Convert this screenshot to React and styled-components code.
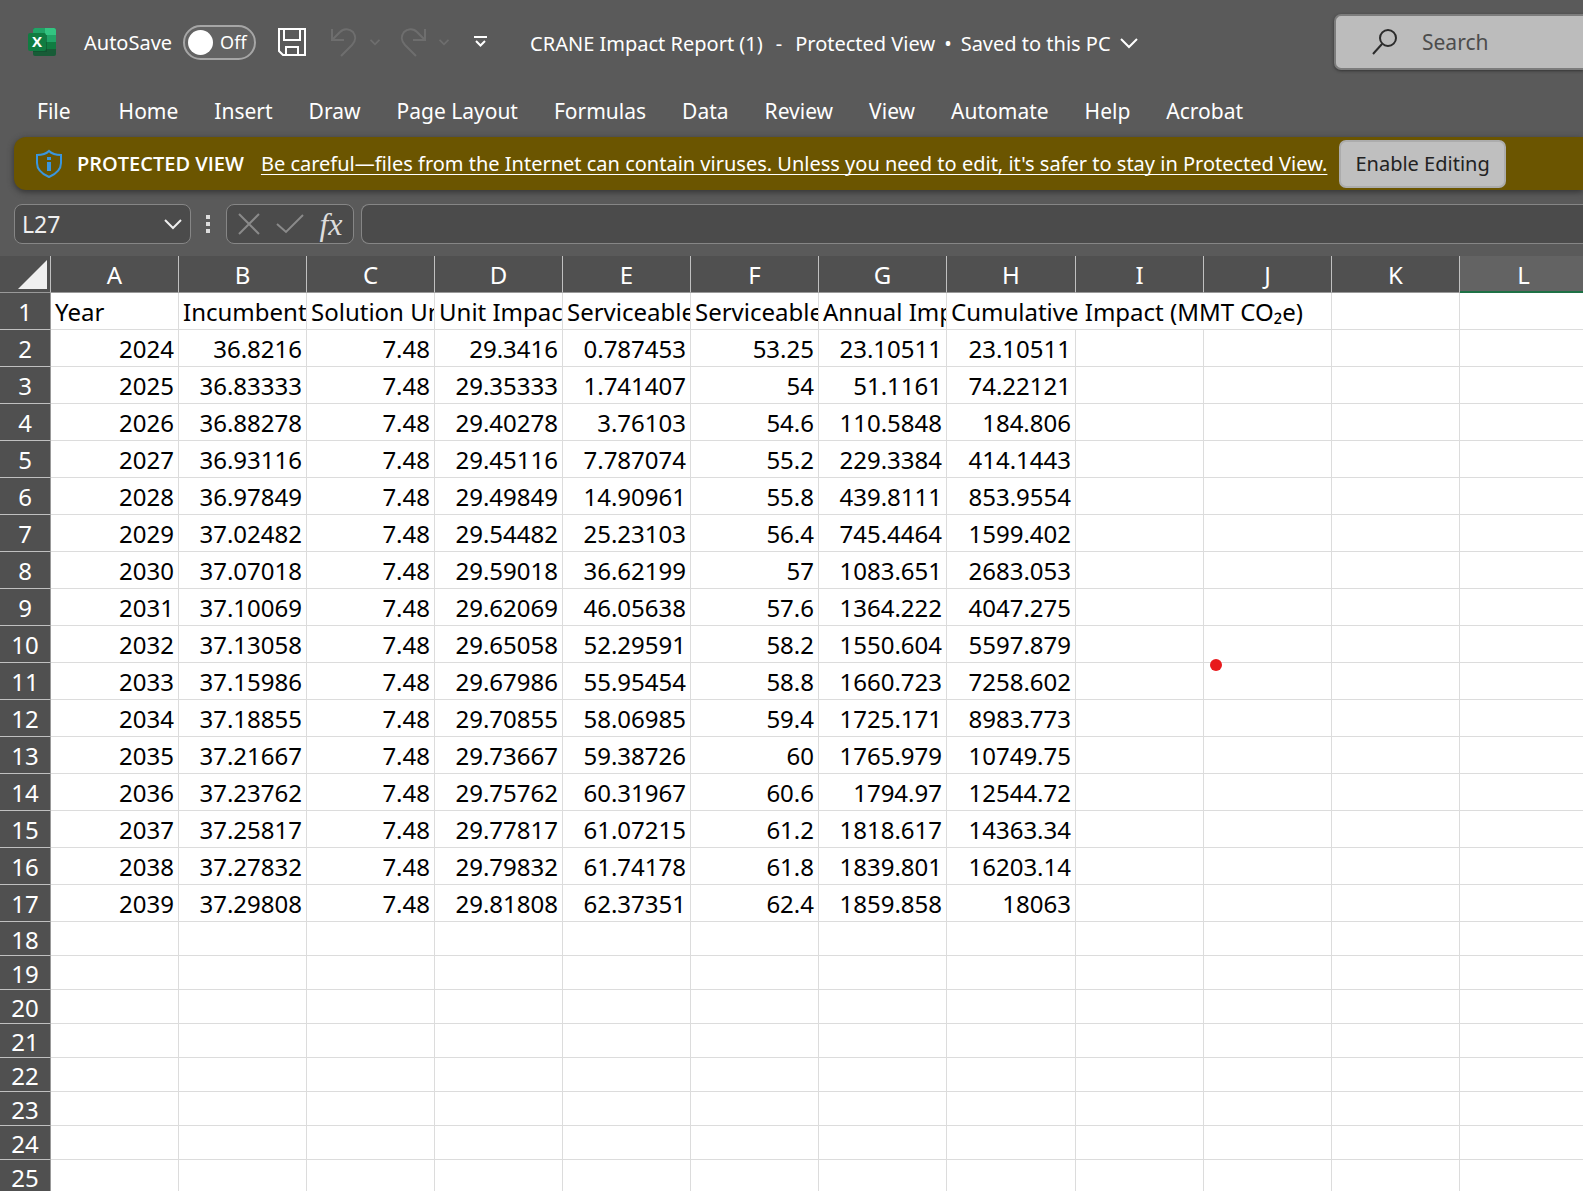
import React from 'react'
import styled, { createGlobalStyle } from 'styled-components'

const GlobalStyle = createGlobalStyle`
  * {
    box-sizing: border-box;
  }

  body {
    margin: 0;
    background: #5a5a5a;
    font-family: 'Noto Sans', 'Open Sans', sans-serif;
    color: #ffffff;
  }

  button,
  input {
    font-family: inherit;
    color: inherit;
  }
`

const Window = styled.div`
  display: flex;
  flex-direction: column;
  height: 100vh;
  overflow: hidden;
`

const TitleBar = styled.header`
  display: flex;
  align-items: center;
  flex: none;
  height: 84px;
  padding-left: 28px;
  white-space: nowrap;
  overflow: hidden;
`

const Logo = styled.svg`
  flex: none;
  width: 28px;
  height: 28px;
`

const LogoLetter = styled.text`
  font-family: 'Open Sans', sans-serif;
  font-size: 15px;
  font-weight: 700;
  fill: #ffffff;
  text-anchor: middle;
`

const AutoSave = styled.label`
  display: flex;
  align-items: center;
  flex: none;
  gap: 11px;
  margin-left: 28px;
  font-size: 20px;
`

const Toggle = styled.span`
  display: flex;
  align-items: center;
  gap: 7px;
  width: 73px;
  height: 35px;
  padding-left: 3px;
  border: 2px solid #a6a6a6;
  border-radius: 18px;
  background: #636363;
  font-size: 18px;
`

const ToggleInput = styled.input`
  appearance: none;
  width: 25px;
  height: 25px;
  margin: 0;
  border-radius: 50%;
  background: #ffffff;
`

const IconButton = styled.button`
  display: flex;
  align-items: center;
  justify-content: center;
  flex: none;
  width: ${props => props.$width}px;
  height: 34px;
  margin-left: ${props => props.$before || 0}px;
  padding: 0;
  border: 0;
  background: none;
  color: ${props => (props.disabled ? '#6e6e6e' : '#ffffff')};
`

const QuickAccess = styled.div`
  display: flex;
  align-items: center;
  flex: none;
  margin-left: 22px;
`

const DocumentName = styled.button`
  display: flex;
  align-items: center;
  flex: none;
  margin-left: 43px;
  padding: 2px 0 0;
  border: 0;
  background: none;
  font-size: 20px;
`

const NamePart = styled.span`
  margin-right: ${props => props.$after || 0}px;
`

const SearchBox = styled.label`
  display: flex;
  align-items: center;
  flex: 1 0 240px;
  gap: 25px;
  height: 56px;
  margin-left: auto;
  padding-left: 36px;
  max-width: 249px;
  border: 2px solid #7c7c7c;
  border-right: 0;
  border-radius: 7px 0 0 7px;
  background: #bcbcbc;
  box-shadow: 0 1px 3px #333333;
  color: #2b2b2b;
`

const SearchInput = styled.input`
  flex: 1;
  min-width: 0;
  padding: 0;
  border: 0;
  background: none;
  font-size: 21px;

  &::placeholder {
    color: #4c4c4c;
    opacity: 1;
  }
`

const Tabs = styled.nav`
  display: flex;
  align-items: center;
  flex: none;
  height: 53px;
  padding-left: 19px;
`

const Tab = styled.button`
  padding: 0 18px;
  border: 0;
  background: none;
  font-size: 21px;
  white-space: nowrap;

  &:first-child {
    margin-right: 12px;
  }
`

const MessageBar = styled.div`
  display: flex;
  align-items: center;
  flex: none;
  height: 53px;
  margin-left: 14px;
  padding-left: 21px;
  border-radius: 12px 0 0 12px;
  background: #6b5500;
  box-shadow: 0 2px 6px #333333;
  white-space: nowrap;
`

const MessageTitle = styled.strong`
  margin: 0 17px 0 14px;
  font-family: 'Open Sans', sans-serif;
  font-size: 20px;
  font-weight: 600;
`

const MessageLink = styled.a`
  color: #ffffff;
  font-size: 20px;
  text-decoration-thickness: 1px;
  text-underline-offset: 3px;
  text-decoration-skip-ink: none;
`

const EnableButton = styled.button`
  height: 48px;
  margin-left: 12px;
  padding: 0 14px;
  border: 2px solid #acacac;
  border-radius: 7px;
  background: #bfbfbf;
  color: #222222;
  font-size: 20px;
`

const FormulaRow = styled.div`
  display: flex;
  align-items: center;
  flex: none;
  height: 66px;
  padding: 2px 0 0 14px;
`

const Field = styled.div`
  display: flex;
  align-items: center;
  flex: none;
  height: 40px;
  border: 1px solid #868686;
  border-radius: 8px;
  background: #4b4b4b;
`

const NameBox = styled(Field)`
  width: 177px;
  padding: 0 8px 0 7px;
  color: #eeeeee;
`

const NameInput = styled.input`
  flex: 1;
  min-width: 0;
  padding: 0;
  border: 0;
  background: none;
  font-size: 23px;
`

const Grip = styled.svg`
  flex: none;
  width: 5px;
  height: 18px;
  margin: 0 15px;
  fill: #dddddd;
`

const FormulaActions = styled(Field)`
  width: 128px;
  padding: 0 2px;
  margin-right: 7px;
`

const FunctionButton = styled(IconButton)`
  font: italic 400 32px 'Liberation Serif', serif;
  color: #dddddd;
`

const FormulaInput = styled.input`
  flex: 1;
  min-width: 0;
  height: 40px;
  border: 1px solid #868686;
  border-right: 0;
  border-radius: 8px 0 0 8px;
  background: #4b4b4b;
  font-size: 22px;
`

const GridArea = styled.main`
  position: relative;
  flex: 1;
  min-height: 0;
  overflow: hidden;
  background: #ffffff;
`

const Sheet = styled.table`
  width: 100%;
  min-width: 1588px;
  border-collapse: separate;
  border-spacing: 0;
  table-layout: fixed;
  color: #000000;
  font-size: 24px;
  line-height: 30px;
`

const HeadCol = styled.col`
  width: 51px;
`

const DataCol = styled.col`
  width: ${props => (props.$wide ? 129 : 128)}px;
`

const CornerCell = styled.td`
  height: 37px;
  padding: 0 3px 3px 0;
  border-right: 1px solid #c0c0c0;
  border-bottom: 1px solid #999999;
  background: #505050;
  vertical-align: bottom;
`

const CornerMark = styled.svg`
  display: block;
  width: 29px;
  height: 29px;
  margin-left: auto;
  fill: #f0f0f0;
`

const ColumnHead = styled.th`
  padding: 2px 0 0;
  border-right: 1px solid #c0c0c0;
  border-bottom: ${props => (props.$active ? '2px solid #1e7145' : '1px solid #999999')};
  background: ${props => (props.$active ? '#636363' : '#505050')};
  color: #ffffff;
  font-weight: 400;
`

const Row = styled.tr`
  height: ${props => (props.$filled ? 37 : 34)}px;
`

const RowHead = styled.th`
  padding: 2px 0 0;
  border-right: 1px solid #999999;
  border-bottom: 1px solid #c0c0c0;
  background: #505050;
  color: #ffffff;
  font-weight: 400;
`

const Cell = styled.td`
  padding: 2px 4px 0;
  border-right: 1px solid #dcdcdc;
  border-bottom: 1px solid #dcdcdc;
  overflow: hidden;
  text-align: ${props => (props.$text ? 'left' : 'right')};
  white-space: nowrap;
`

const Pointer = styled.span`
  position: absolute;
  top: 403px;
  left: 1210px;
  width: 12px;
  height: 12px;
  border-radius: 50%;
  background: #e8191c;
`

const tabs = [
  'File',
  'Home',
  'Insert',
  'Draw',
  'Page Layout',
  'Formulas',
  'Data',
  'Review',
  'View',
  'Automate',
  'Help',
  'Acrobat'
]

const columns = 'ABCDEFGHIJKL'.split('')

const headings = [
  'Year',
  'Incumbent',
  'Solution Un',
  'Unit Impac',
  'Serviceable',
  'Serviceable',
  'Annual Imp'
]

const rows = [
  ['2024', '36.8216', '7.48', '29.3416', '0.787453', '53.25', '23.10511', '23.10511'],
  ['2025', '36.83333', '7.48', '29.35333', '1.741407', '54', '51.1161', '74.22121'],
  ['2026', '36.88278', '7.48', '29.40278', '3.76103', '54.6', '110.5848', '184.806'],
  ['2027', '36.93116', '7.48', '29.45116', '7.787074', '55.2', '229.3384', '414.1443'],
  ['2028', '36.97849', '7.48', '29.49849', '14.90961', '55.8', '439.8111', '853.9554'],
  ['2029', '37.02482', '7.48', '29.54482', '25.23103', '56.4', '745.4464', '1599.402'],
  ['2030', '37.07018', '7.48', '29.59018', '36.62199', '57', '1083.651', '2683.053'],
  ['2031', '37.10069', '7.48', '29.62069', '46.05638', '57.6', '1364.222', '4047.275'],
  ['2032', '37.13058', '7.48', '29.65058', '52.29591', '58.2', '1550.604', '5597.879'],
  ['2033', '37.15986', '7.48', '29.67986', '55.95454', '58.8', '1660.723', '7258.602'],
  ['2034', '37.18855', '7.48', '29.70855', '58.06985', '59.4', '1725.171', '8983.773'],
  ['2035', '37.21667', '7.48', '29.73667', '59.38726', '60', '1765.979', '10749.75'],
  ['2036', '37.23762', '7.48', '29.75762', '60.31967', '60.6', '1794.97', '12544.72'],
  ['2037', '37.25817', '7.48', '29.77817', '61.07215', '61.2', '1818.617', '14363.34'],
  ['2038', '37.27832', '7.48', '29.79832', '61.74178', '61.8', '1839.801', '16203.14'],
  ['2039', '37.29808', '7.48', '29.81808', '62.37351', '62.4', '1859.858', '18063']
]

const emptyRows = [18, 19, 20, 21, 22, 23, 24, 25]

const Chevron = ({ size, width = 2 }) => (
  <svg width={size} height={size} viewBox="0 0 18 18" fill="none" stroke="currentColor" strokeWidth={width}>
    <path d="M1 5 L9 13 L17 5" />
  </svg>
)

const ExcelLogo = () => (
  <Logo viewBox="0 0 28 28">
    <rect x="5" width="23" height="28" rx="2" fill="#185c37" />
    <path d="M5 14V2a2 2 0 0 1 2-2h10v14z" fill="#21a366" />
    <path d="M17 0h9a2 2 0 0 1 2 2v5H17z" fill="#33c481" />
    <path d="M17 7h11v7H17z" fill="#21a366" />
    <path d="M17 14h11v7H17z" fill="#107c41" />
    <path d="M5 7h14v17H5z" fill="#0b4a2a" opacity="0.5" />
    <rect y="5" width="18" height="18" rx="2" fill="#107c41" />
    <LogoLetter x="9" y="19">X</LogoLetter>
  </Logo>
)

const SaveIcon = () => (
  <svg width="28" height="28" viewBox="0 0 28 28" fill="none" stroke="currentColor" strokeWidth="2">
    <path d="M1 1h26v26H5l-4-4z" />
    <path d="M6 1v11h16V1" />
    <path d="M8 27v-8h12v8" />
  </svg>
)

const UndoIcon = () => (
  <svg width="26" height="29" viewBox="0 0 26 29" fill="none" stroke="currentColor" strokeWidth="2">
    <path d="M1 1v11h12" />
    <path d="M1 12 9 4C13-0.500 19 1 22 4c3 4 3 9-1 13L10 28" />
  </svg>
)

const RedoIcon = () => (
  <svg width="26" height="29" viewBox="0 0 26 29" fill="none" stroke="currentColor" strokeWidth="2">
    <path d="M25 1v11H13" />
    <path d="M25 12 17 4C13-0.500 7 1 4 4c-3 4-3 9 1 13l11 11" />
  </svg>
)

const ShieldIcon = () => (
  <svg width="28" height="30" viewBox="0 0 28 30" fill="none" stroke="#3a96dd" strokeWidth="2">
    <path d="M14 2c3 3 7 4 12 4v8c0 7-5 11-12 14C7 25 2 21 2 14V6c5 0 9-1 12-4z" />
    <path d="M14 8v3M14 13v9" strokeWidth="4" />
  </svg>
)

const App = () => (
  <React.Fragment>
    <GlobalStyle />
    <Window>
      <TitleBar>
        <ExcelLogo />
        <AutoSave>
          AutoSave
          <Toggle>
            <ToggleInput type="checkbox" role="switch" />
            Off
          </Toggle>
        </AutoSave>
        <QuickAccess>
          <IconButton $width={28} aria-label="Save">
            <SaveIcon />
          </IconButton>
          <IconButton $width={26} $before={25} aria-label="Undo" disabled>
            <UndoIcon />
          </IconButton>
          <IconButton $width={10} $before={13} aria-label="Undo list" disabled>
            <Chevron size={10} width={3} />
          </IconButton>
          <IconButton $width={26} $before={20} aria-label="Redo" disabled>
            <RedoIcon />
          </IconButton>
          <IconButton $width={10} $before={13} aria-label="Redo list" disabled>
            <Chevron size={10} width={3} />
          </IconButton>
          <IconButton $width={13} $before={25} aria-label="Customize toolbar">
            <svg width="13" height="12" viewBox="0 0 13 12" fill="none" stroke="currentColor" strokeWidth="2">
              <path d="M0 1h13M2 5l4.500 4.500L11 5" />
            </svg>
          </IconButton>
        </QuickAccess>
        <DocumentName>
          <NamePart $after={13}>CRANE Impact Report (1)</NamePart>
          <NamePart $after={13}>-</NamePart>
          <NamePart $after={9}>Protected View</NamePart>
          <NamePart $after={9}>•</NamePart>
          <NamePart $after={9}>Saved to this PC</NamePart>
          <Chevron size={18} />
        </DocumentName>
        <SearchBox>
          <svg width="25" height="26" viewBox="0 0 25 26" fill="none" stroke="currentColor" strokeWidth="2">
            <circle cx="16" cy="9" r="8" />
            <path d="M10 15 1 25" />
          </svg>
          <SearchInput type="text" placeholder="Search" aria-label="Search" />
        </SearchBox>
      </TitleBar>

      <Tabs>
        {tabs.map(tab => (
          <Tab key={tab}>{tab}</Tab>
        ))}
      </Tabs>

      <MessageBar>
        <ShieldIcon />
        <MessageTitle>PROTECTED VIEW</MessageTitle>
        <MessageLink href="#protected-view">
          Be careful—files from the Internet can contain viruses. Unless you need to edit, it's safer to stay in
          Protected View.
        </MessageLink>
        <EnableButton>Enable Editing</EnableButton>
      </MessageBar>

      <FormulaRow>
        <NameBox>
          <NameInput type="text" defaultValue="L27" aria-label="Name box" />
          <Chevron size={18} />
        </NameBox>
        <Grip viewBox="0 0 5 18">
          <rect width="4" height="4" />
          <rect y="7" width="4" height="4" />
          <rect y="14" width="4" height="4" />
        </Grip>
        <FormulaActions>
          <IconButton $width={40} aria-label="Cancel" disabled>
            <svg width="22" height="22" viewBox="0 0 22 22" stroke="#8a8a8a" strokeWidth="2">
              <path d="M1 1l20 20M21 1 1 21" />
            </svg>
          </IconButton>
          <IconButton $width={42} aria-label="Enter" disabled>
            <svg width="28" height="20" viewBox="0 0 28 20" fill="none" stroke="#8a8a8a" strokeWidth="2">
              <path d="M1 10l9 8L27 1" />
            </svg>
          </IconButton>
          <FunctionButton $width={40}>fx</FunctionButton>
        </FormulaActions>
        <FormulaInput type="text" aria-label="Formula bar" />
      </FormulaRow>

      <GridArea>
        <Sheet>
          <colgroup>
            <HeadCol />
            {columns.slice(0, -1).map(name => (
              <DataCol key={name} $wide={name === 'H'} />
            ))}
            <col />
          </colgroup>
          <thead>
            <tr>
              <CornerCell>
                <CornerMark viewBox="0 0 29 29">
                  <path d="M29 0v29H0z" />
                </CornerMark>
              </CornerCell>
              {columns.map(name => (
                <ColumnHead key={name} scope="col" $active={name === 'L'}>
                  {name}
                </ColumnHead>
              ))}
            </tr>
          </thead>
          <tbody>
            <Row $filled>
              <RowHead scope="row">1</RowHead>
              {headings.map((heading, index) => (
                <Cell key={index} $text>
                  {heading}
                </Cell>
              ))}
              <Cell $text colSpan={3}>
                Cumulative Impact (MMT CO₂e)
              </Cell>
              <Cell />
              <Cell />
            </Row>
            {rows.map((row, index) => (
              <Row key={row[0]} $filled>
                <RowHead scope="row">{index + 2}</RowHead>
                {columns.map((name, col) => (
                  <Cell key={name}>{row[col]}</Cell>
                ))}
              </Row>
            ))}
            {emptyRows.map(number => (
              <Row key={number}>
                <RowHead scope="row">{number}</RowHead>
                {columns.map(name => (
                  <Cell key={name} />
                ))}
              </Row>
            ))}
          </tbody>
        </Sheet>
        <Pointer />
      </GridArea>
    </Window>
  </React.Fragment>
)

export default App
